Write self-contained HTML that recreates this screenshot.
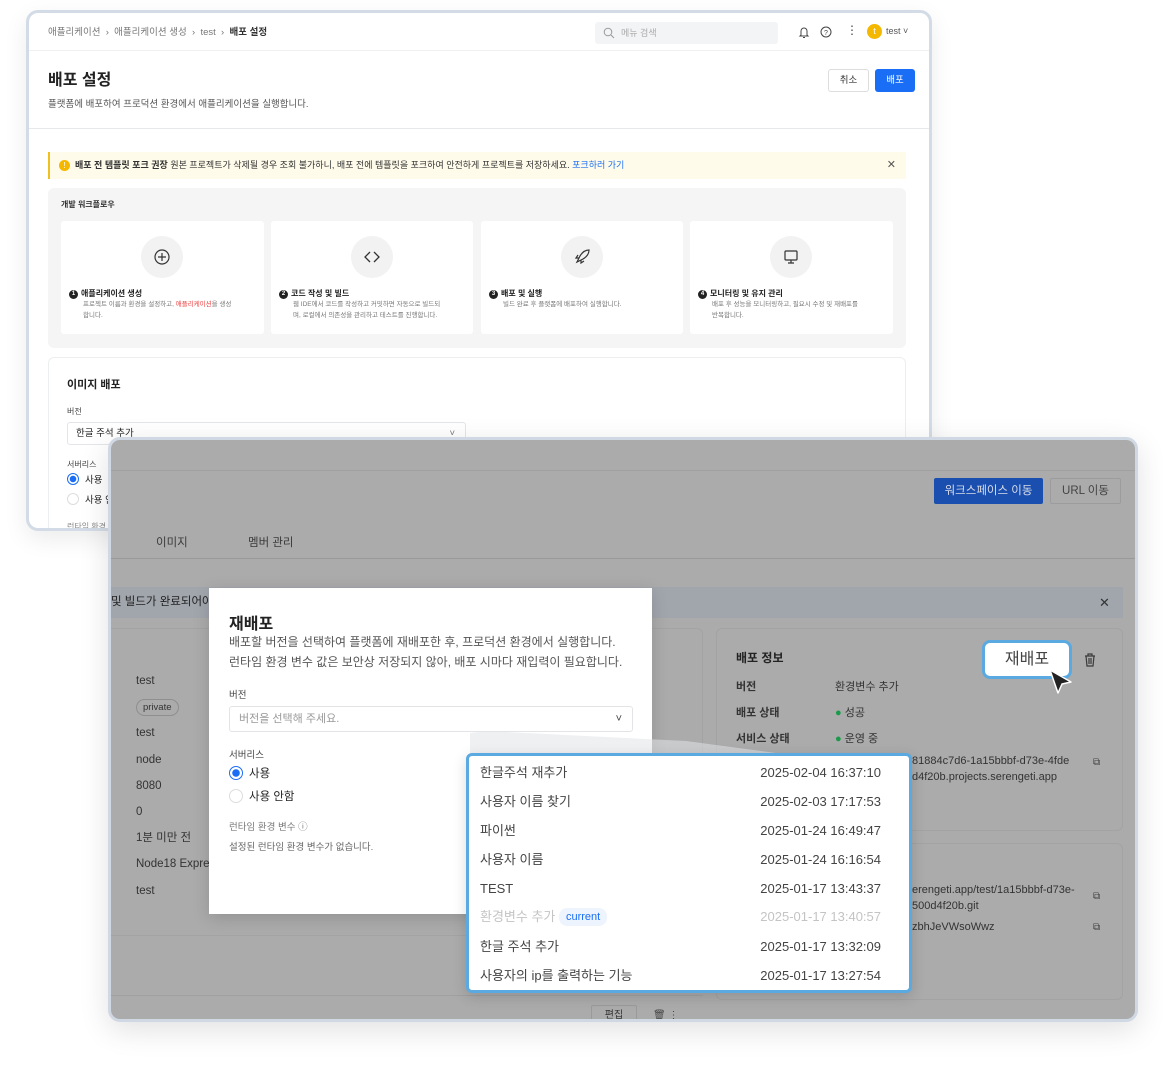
<!DOCTYPE html>
<html><head><meta charset="utf-8">
<style>
*{box-sizing:border-box;margin:0;padding:0}
body{width:1163px;height:1065px;background:#fff;position:relative;overflow:hidden;font-family:"Liberation Sans","Noto Sans CJK KR",sans-serif;color:#222}
.a{position:absolute;white-space:nowrap}
.w1{position:absolute;left:26px;top:10px;width:906px;height:521px;border:3px solid #d3dbe6;border-radius:12px;background:#fff;overflow:hidden;box-shadow:0 8px 24px rgba(0,0,0,.08)}
.w2{position:absolute;left:108px;top:437px;width:1030px;height:585px;border:3px solid #d0d8e3;border-radius:12px;background:#ababab;overflow:hidden;box-shadow:0 8px 30px rgba(0,0,0,.12)}
.card{position:absolute;background:#fff;border-radius:3px}
.ic{position:absolute;left:80px;top:15px;width:42px;height:42px;border-radius:50%;background:#f2f2f3}
.num{display:inline-block;width:9px;height:9px;border-radius:50%;background:#222;color:#fff;font-size:6px;text-align:center;line-height:9px;margin-right:3px;vertical-align:1px}
.ct{position:absolute;left:8px;top:67px;font-size:8px;font-weight:bold}
.cd{position:absolute;left:22px;top:78px;font-size:6.5px;color:#777;line-height:11px;white-space:normal;width:150px}
.row{position:absolute;left:11px;right:28px;height:29px;font-size:13px;color:#444;line-height:29px}
.row span.d{position:absolute;right:0;top:0}
</style></head><body>

<div class="w1">
 <div class="a" style="left:19px;top:11px;font-size:9.5px;color:#777">애플리케이션 &nbsp;›&nbsp; 애플리케이션 생성 &nbsp;›&nbsp; test &nbsp;›&nbsp; <b style="color:#333">배포 설정</b></div>
 <div class="a" style="left:566px;top:9px;width:183px;height:22px;background:#f3f4f6;border-radius:3px;font-size:9px;color:#aaa;line-height:22px;padding-left:26px">메뉴 검색
  <svg style="position:absolute;left:8px;top:5px" width="12" height="12" viewBox="0 0 12 12"><circle cx="5" cy="5" r="3.8" fill="none" stroke="#999" stroke-width="1"/><path d="M8 8l3 3" stroke="#999"/></svg></div>
 <svg class="a" style="left:769px;top:13px" width="12" height="13" viewBox="0 0 12 13"><path d="M3 9V5a3 3 0 016 0v4l1 1H2z M5 11.5h2" fill="none" stroke="#444" stroke-width="1"/></svg>
 <svg class="a" style="left:791px;top:13px" width="12" height="12" viewBox="0 0 12 12"><circle cx="6" cy="6" r="5" fill="none" stroke="#444"/><text x="6" y="9" font-size="7" text-anchor="middle" fill="#444">?</text></svg>
 <div class="a" style="left:817px;top:10px;font-size:12px;color:#444">⋮</div>
 <div class="a" style="left:838px;top:11px;width:15px;height:15px;border-radius:50%;background:#f5b800;color:#fff;font-size:9px;text-align:center;line-height:15px">t</div>
 <div class="a" style="left:857px;top:13px;font-size:9px;color:#555">test ˅</div>
 <div class="a" style="left:0;top:37px;width:906px;border-top:1px solid #eef0f2"></div>
 <div class="a" style="left:19px;top:53px;font-size:16px;font-weight:bold">배포 설정</div>
 <div class="a" style="left:19px;top:83px;font-size:9.5px;color:#555">플랫폼에 배포하여 프로덕션 환경에서 애플리케이션을 실행합니다.</div>
 <div class="a" style="left:799px;top:56px;width:41px;height:23px;border:1px solid #ddd;border-radius:3px;font-size:9.5px;text-align:center;line-height:21px;color:#333">취소</div>
 <div class="a" style="left:846px;top:56px;width:40px;height:23px;background:#1a6ef5;border-radius:3px;font-size:9.5px;text-align:center;line-height:23px;color:#fff">배포</div>
 <div class="a" style="left:0;top:115px;width:906px;border-top:1px solid #e6e8eb"></div>
 <div class="a" style="left:19px;top:139px;width:858px;height:27px;background:#fffbea;border-left:2px solid #f0c020;font-size:9px;line-height:27px;padding-left:25px;color:#333"><b>배포 전 템플릿 포크 권장</b> 원본 프로젝트가 삭제될 경우 조회 불가하니, 배포 전에 템플릿을 포크하여 안전하게 프로젝트를 저장하세요. <span style="color:#1a6ef5">포크하러 가기</span>
  <div style="position:absolute;left:9px;top:8px;width:11px;height:11px;border-radius:50%;background:#f5b800;color:#fff;font-size:8px;line-height:11px;text-align:center">!</div>
  <div style="position:absolute;right:10px;top:0;font-size:11px;color:#555">✕</div></div>
 <div class="a" style="left:19px;top:175px;width:858px;height:160px;background:#f5f5f6;border-radius:6px">
  <div class="a" style="left:13px;top:11px;font-size:8px;font-weight:bold;color:#333">개발 워크플로우</div>
  <div class="card" style="left:13px;top:33px;width:203px;height:113px"><div class="ic"><svg width="42" height="42" viewBox="0 0 42 42"><circle cx="21" cy="21" r="7" fill="none" stroke="#333" stroke-width="1.2"/><path d="M21 17v8M17 21h8" stroke="#333" stroke-width="1.2"/></svg></div><div class="ct"><span class="num">1</span>애플리케이션 생성</div><div class="cd">프로젝트 이름과 환경을 설정하고, <span style="color:#e44">애플리케이션</span>을 생성합니다.</div></div>
  <div class="card" style="left:223px;top:33px;width:202px;height:113px"><div class="ic"><svg width="42" height="42" viewBox="0 0 42 42"><path d="M19 16l-5 5 5 5M23 16l5 5-5 5" fill="none" stroke="#333" stroke-width="1.3"/></svg></div><div class="ct"><span class="num">2</span>코드 작성 및 빌드</div><div class="cd">웹 IDE에서 코드를 작성하고 커밋하면 자동으로 빌드되며, 로컬에서 의존성을 관리하고 테스트를 진행합니다.</div></div>
  <div class="card" style="left:433px;top:33px;width:202px;height:113px"><div class="ic"><svg width="42" height="42" viewBox="0 0 42 42"><path d="M16 26l3-6c3-5 6-6 9-6 0 3-1 6-6 9l-6 3zM18 22l-3 0 2-3M20 24v3l3-2" fill="none" stroke="#333" stroke-width="1.2"/></svg></div><div class="ct"><span class="num">3</span>배포 및 실행</div><div class="cd">빌드 완료 후 플랫폼에 배포하여 실행합니다.</div></div>
  <div class="card" style="left:642px;top:33px;width:203px;height:113px"><div class="ic"><svg width="42" height="42" viewBox="0 0 42 42"><rect x="15" y="15" width="12" height="9" rx="1" fill="none" stroke="#333" stroke-width="1.2"/><path d="M21 24v3M18 27h6" stroke="#333" stroke-width="1.2"/></svg></div><div class="ct"><span class="num">4</span>모니터링 및 유지 관리</div><div class="cd">배포 후 성능을 모니터링하고, 필요시 수정 및 재배포를 반복합니다.</div></div>
 </div>
 <div class="a" style="left:19px;top:344px;width:858px;height:200px;border:1px solid #eceef0;border-radius:6px">
  <div class="a" style="left:18px;top:18px;font-size:11px;font-weight:bold">이미지 배포</div>
  <div class="a" style="left:18px;top:48px;font-size:8px;color:#444">버전</div>
  <div class="a" style="left:18px;top:64px;width:399px;height:23px;border:1px solid #e3e5e8;border-radius:3px;font-size:9.5px;line-height:21px;padding-left:8px">한글 주석 추가<span style="position:absolute;right:10px;color:#777">˅</span></div>
  <div class="a" style="left:18px;top:101px;font-size:8px;color:#444">서버리스</div>
  <div class="a" style="left:18px;top:115px;width:12px;height:12px;border-radius:50%;border:1.5px solid #1a6ef5;background:radial-gradient(#1a6ef5 3px,#fff 3.5px)"></div>
  <div class="a" style="left:36px;top:114px;font-size:9.5px">사용</div>
  <div class="a" style="left:18px;top:135px;width:12px;height:12px;border-radius:50%;border:1px solid #ddd"></div>
  <div class="a" style="left:36px;top:134px;font-size:9.5px">사용 안함</div>
  <div class="a" style="left:18px;top:163px;font-size:8px;color:#888">런타임 환경</div>
 </div>
</div>

<div class="w2">
 <div class="a" style="left:0;top:30px;width:1030px;border-top:1px solid #a0a0a0"></div>
 <div class="a" style="left:823px;top:38px;width:109px;height:26px;background:#1a4fb0;border-radius:2px;color:#d8dce6;font-size:11.5px;text-align:center;line-height:26px">워크스페이스 이동</div>
 <div class="a" style="left:939px;top:38px;width:71px;height:26px;border:1px solid #9c9c9c;border-radius:2px;color:#444;font-size:11.5px;text-align:center;line-height:24px">URL 이동</div>
 <div class="a" style="left:45px;top:94px;font-size:11.5px;color:#3a3a3a">이미지</div>
 <div class="a" style="left:137px;top:94px;font-size:11.5px;color:#3a3a3a">멤버 관리</div>
 <div class="a" style="left:0;top:118px;width:1030px;border-top:1px solid #999"></div>
 <div class="a" style="left:0;top:147px;width:1012px;height:31px;background:#a1a6ad;font-size:11.5px;line-height:31px;color:#222">및 빌드가 완료되어야 해<span style="position:absolute;left:988px;font-size:13px;color:#333">✕</span></div>
 <div class="a" style="left:0;top:188px;width:592px;height:308px;border:1px solid #a3a3a3;border-left:none;border-radius:0 6px 6px 0"></div>
 <div class="a" style="left:25px;top:228px;font-size:11.5px;color:#333;line-height:26.2px">test<br><span style="display:inline-block;border:1px solid #8f8f8f;border-radius:9px;font-size:9.5px;padding:0 6px;line-height:15px">private</span><br>test<br>node<br>8080<br>0<br>1분 미만 전<br>Node18 Express<br>test</div>
 <div class="a" style="left:605px;top:188px;width:407px;height:203px;border:1px solid #a3a3a3;border-radius:6px">
  <div class="a" style="left:19px;top:20px;font-size:12px;font-weight:bold;color:#222">배포 정보</div>
  <div class="a" style="left:19px;top:45px;font-size:11px;color:#333;line-height:26px;font-weight:bold">버전<br>배포 상태<br>서비스 상태</div>
  <div class="a" style="left:118px;top:45px;font-size:11px;color:#333;line-height:26px">환경변수 추가<br><span style="color:#1a9a4a">●</span> 성공<br><span style="color:#1a9a4a">●</span> 운영 중</div>
  <div class="a" style="left:195px;top:124px;font-size:11px;color:#333;line-height:16px">81884c7d6-1a15bbbf-d73e-4fde<br>d4f20b.projects.serengeti.app</div>
  <div class="a" style="left:376px;top:128px;font-size:10px;color:#444">⧉</div>
 </div>
 <div class="a" style="left:605px;top:403px;width:407px;height:157px;border:1px solid #a3a3a3;border-radius:6px">
  <div class="a" style="left:195px;top:38px;font-size:11px;color:#333;line-height:16px">erengeti.app/test/1a15bbbf-d73e-<br>500d4f20b.git</div>
  <div class="a" style="left:195px;top:77px;font-size:11px;color:#333">zbhJeVWsoWwz</div>
  <div class="a" style="left:376px;top:47px;font-size:10px;color:#444">⧉</div>
  <div class="a" style="left:376px;top:78px;font-size:10px;color:#444">⧉</div>
 </div>
 <div class="a" style="left:0;top:555px;width:592px;border-top:1px solid #a0a0a0"></div>
 <div class="a" style="left:480px;top:565px;width:46px;height:22px;border:1px solid #9a9a9a;border-radius:2px;font-size:10px;text-align:center;line-height:20px;color:#333">편집</div>
 <div class="a" style="left:542px;top:570px;font-size:10px;color:#444">🗑 ⋮</div>
</div>

<svg class="a" style="left:1083px;top:652px" width="14" height="16" viewBox="0 0 14 16"><path d="M2 4h10M5 4V2h4v2M3 4l1 10h6l1-10M6 6v6M8 6v6" fill="none" stroke="#3a3a3a" stroke-width="1.2"/></svg>

<!-- modal -->
<div class="a" style="left:209px;top:588px;width:443px;height:326px;background:#fff;box-shadow:0 4px 16px rgba(0,0,0,.15)">
 <div class="a" style="left:20px;top:22px;font-size:16px;font-weight:bold">재배포</div>
 <div class="a" style="left:20px;top:44px;font-size:12px;color:#555;line-height:20px">배포할 버전을 선택하여 플랫폼에 재배포한 후, 프로덕션 환경에서 실행합니다.<br>런타임 환경 변수 값은 보안상 저장되지 않아, 배포 시마다 재입력이 필요합니다.</div>
 <div class="a" style="left:20px;top:99px;font-size:9.5px;color:#444">버전</div>
 <div class="a" style="left:20px;top:118px;width:404px;height:26px;border:1px solid #e2e4e8;border-radius:3px;font-size:11px;color:#999;line-height:24px;padding-left:9px">버전을 선택해 주세요.<span style="position:absolute;right:10px;color:#444">˅</span></div>
 <div class="a" style="left:20px;top:159px;font-size:9.5px;color:#444">서버리스</div>
 <div class="a" style="left:20px;top:178px;width:14px;height:14px;border-radius:50%;border:1.5px solid #1a6ef5;background:radial-gradient(#1a6ef5 3.5px,#fff 4px)"></div>
 <div class="a" style="left:40px;top:177px;font-size:11.5px">사용</div>
 <div class="a" style="left:20px;top:201px;width:14px;height:14px;border-radius:50%;border:1px solid #ddd"></div>
 <div class="a" style="left:40px;top:200px;font-size:11.5px">사용 안함</div>
 <div class="a" style="left:20px;top:231px;font-size:9.5px;color:#777">런타임 환경 변수 ⓘ</div>
 <div class="a" style="left:20px;top:251px;font-size:9.5px;color:#666">설정된 런타임 환경 변수가 없습니다.</div>
</div>

<svg class="a" style="left:466px;top:725px" width="360" height="32" viewBox="0 0 360 32"><polygon points="4,8 4,32 340,32 220,16 20,6" fill="rgba(225,228,232,.55)"/></svg>

<div class="a" style="left:466px;top:753px;width:446px;height:240px;background:#fff;border:3px solid #5aa9e0;border-radius:6px;box-shadow:0 4px 14px rgba(0,0,0,.15)">
 <div class="row" style="top:2px">한글주석 재추가<span class="d">2025-02-04 16:37:10</span></div>
 <div class="row" style="top:31px">사용자 이름 찾기<span class="d">2025-02-03 17:17:53</span></div>
 <div class="row" style="top:60px">파이썬<span class="d">2025-01-24 16:49:47</span></div>
 <div class="row" style="top:89px">사용자 이름<span class="d">2025-01-24 16:16:54</span></div>
 <div class="row" style="top:118px">TEST<span class="d">2025-01-17 13:43:37</span></div>
 <div class="row" style="top:146px;color:#c4c4c4">환경변수 추가 <span style="display:inline-block;background:#eef4fd;color:#1a6ef5;font-size:11px;line-height:18px;padding:0 7px;border-radius:8px;vertical-align:1px">current</span><span class="d">2025-01-17 13:40:57</span></div>
 <div class="row" style="top:176px">한글 주석 추가<span class="d">2025-01-17 13:32:09</span></div>
 <div class="row" style="top:205px">사용자의 ip를 출력하는 기능<span class="d">2025-01-17 13:27:54</span></div>
</div>

<div class="a" style="left:982px;top:640px;width:90px;height:39px;background:#fff;border:3px solid #5aa9e0;border-radius:8px;font-size:16px;color:#444;text-align:center;line-height:33px">재배포</div>
<svg class="a" style="left:1047px;top:668px" width="28" height="30" viewBox="0 0 28 30"><path d="M3 2l21 12-9 2-4 9z" fill="#222" stroke="#fff" stroke-width="1.5" stroke-linejoin="round"/></svg>

</body></html>
